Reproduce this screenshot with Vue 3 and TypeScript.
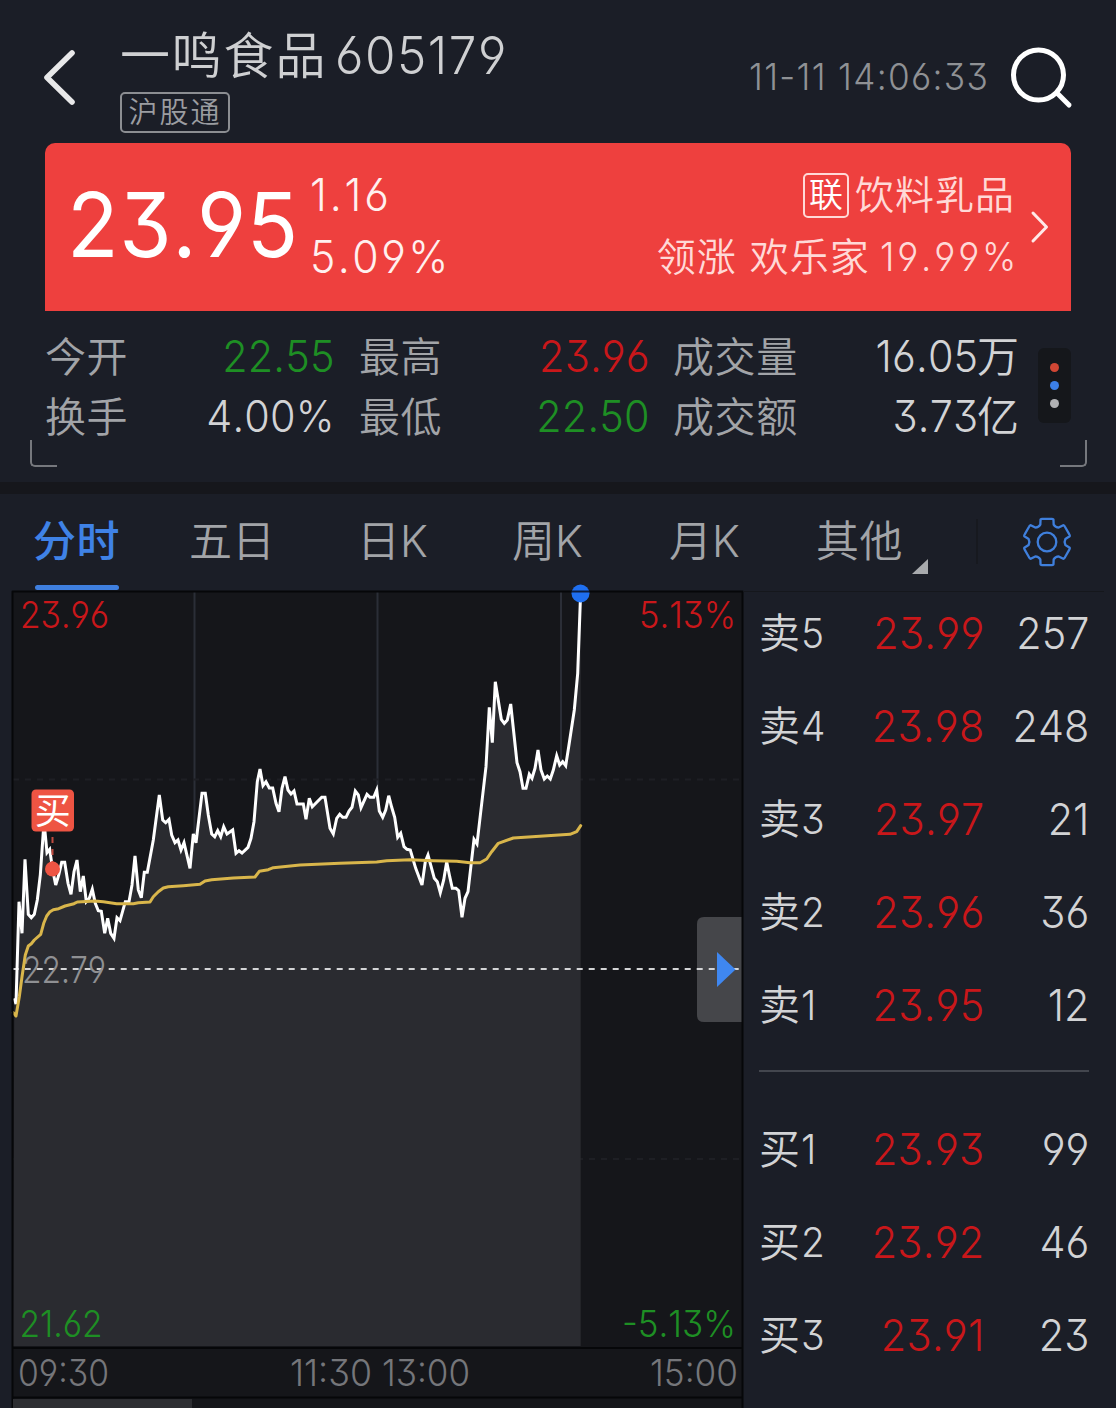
<script setup lang="ts">
type Tone = 'up' | 'down' | 'plain'

interface Stat { label: string; value: string; unit?: string; tone: Tone }
interface Quote { side: string; level: number; price: string; amount: number }
type Point = [number, number]

const stats: Stat[][] = [
  [
    { label: '今开', value: '22.55', tone: 'down' },
    { label: '换手', value: '4.00%', tone: 'plain' },
  ],
  [
    { label: '最高', value: '23.96', tone: 'up' },
    { label: '最低', value: '22.50', tone: 'down' },
  ],
  [
    { label: '成交量', value: '16.05', unit: '万', tone: 'plain' },
    { label: '成交额', value: '3.73', unit: '亿', tone: 'plain' },
  ],
]

const asks: Quote[] = [
  { side: '卖', level: 5, price: '23.99', amount: 257 },
  { side: '卖', level: 4, price: '23.98', amount: 248 },
  { side: '卖', level: 3, price: '23.97', amount: 21 },
  { side: '卖', level: 2, price: '23.96', amount: 36 },
  { side: '卖', level: 1, price: '23.95', amount: 12 },
]
const bids: Quote[] = [
  { side: '买', level: 1, price: '23.93', amount: 99 },
  { side: '买', level: 2, price: '23.92', amount: 46 },
  { side: '买', level: 3, price: '23.91', amount: 23 },
]

// Samples are stored in thirds of a pixel, measured from y = 580.
const price: Point[] = [
  [43, 1255], [48, 1272], [57, 965], [66, 1060], [75, 838], [85, 1003], [94, 1013], [103, 1003], [112, 960],
  [121, 885], [130, 755], [135, 755], [141, 818], [149, 808], [158, 870], [167, 915], [176, 885], [185, 847],
  [194, 847], [204, 910], [213, 943], [222, 875], [231, 840], [241, 935], [250, 888], [259, 965], [268, 955],
  [277, 928], [286, 970], [295, 992], [304, 994], [314, 1060], [323, 1015], [332, 1060], [342, 1075],
  [351, 1013], [360, 1022], [376, 965], [387, 965], [396, 915], [405, 828], [415, 930], [424, 953],
  [433, 877], [442, 877], [460, 780], [478, 645], [488, 720], [497, 728], [507, 718], [515, 765],
  [525, 788], [534, 780], [543, 810], [552, 788], [570, 865], [580, 762], [588, 788], [606, 640],
  [616, 640], [625, 705], [635, 762], [644, 770], [653, 752], [662, 770], [671, 740], [681, 762],
  [698, 750], [708, 820], [717, 812], [726, 819], [744, 802], [753, 775], [762, 725], [772, 605],
  [780, 567], [789, 617], [798, 605], [808, 624], [818, 624], [828, 670], [837, 695], [846, 625],
  [855, 590], [864, 630], [873, 642], [882, 633], [891, 672], [910, 672], [918, 718], [928, 655],
  [937, 680], [965, 652], [975, 652], [990, 745], [1000, 762], [1010, 715], [1019, 703], [1028, 712],
  [1038, 712], [1047, 693], [1056, 682], [1066, 633], [1075, 645], [1083, 683], [1101, 643], [1110, 652],
  [1121, 652], [1130, 630], [1138, 693], [1148, 712], [1157, 690], [1166, 647], [1175, 682], [1184, 712],
  [1193, 772], [1202, 760], [1212, 800], [1221, 808], [1231, 810], [1247, 865], [1266, 915], [1276, 845],
  [1284, 825], [1303, 895], [1312, 905], [1321, 938], [1331, 900], [1340, 845], [1349, 890], [1357, 925],
  [1368, 925], [1376, 932], [1386, 1012], [1395, 955], [1404, 935], [1422, 778], [1431, 792], [1458, 560],
  [1468, 382], [1477, 488], [1486, 305], [1504, 418], [1513, 430], [1522, 420], [1532, 372], [1551, 548],
  [1560, 575], [1569, 625], [1578, 625], [1588, 583], [1596, 595], [1605, 565], [1614, 510], [1623, 570],
  [1633, 597], [1642, 588], [1651, 597], [1660, 570], [1670, 527], [1679, 555], [1688, 545], [1697, 557],
  [1706, 500], [1723, 390], [1733, 280], [1741, 65], [1742, 40],
]
const average: Point[] = [
  [40, 1298], [48, 1308], [58, 1250], [66, 1190], [76, 1125], [85, 1098], [94, 1091], [103, 1080],
  [122, 1063], [131, 1030], [140, 1008], [150, 995], [160, 989], [176, 986], [195, 978], [222, 971],
  [232, 966], [285, 963], [310, 965], [350, 971], [400, 971], [415, 968], [450, 966], [460, 950],
  [475, 935], [490, 924], [505, 920], [550, 917], [600, 913], [615, 903], [635, 899], [700, 894],
  [765, 891], [778, 874], [805, 869], [820, 863], [900, 855], [1020, 850], [1130, 846], [1160, 842],
  [1230, 839], [1300, 842], [1370, 844], [1410, 848], [1440, 848], [1460, 837], [1475, 815],
  [1495, 790], [1540, 774], [1710, 763], [1730, 755], [1742, 737],
]
const trace = (pts: Point[]) => pts.map(([x, y]) => `${(x / 3).toFixed(1)},${(580 + y / 3).toFixed(1)}`).join(' ')
const priceLine = trace(price)
const averageLine = trace(average)
const area = `13,1346 ${priceLine} 580.7,1346`

const chartLabels = [
  { text: '22.79', tone: 'mute', x: 22, y: 983, w: 84 },
  { text: '23.96', tone: 'hi', x: 20, y: 628, w: 89 },
  { text: '5.13%', tone: 'hi', x: 639, y: 628, w: 97 },
  { text: '21.62', tone: 'lo', x: 19.5, y: 1337, w: 83 },
  { text: '-5.13%', tone: 'lo', x: 622, y: 1337, w: 114 },
  { text: '09:30', tone: 'axis', x: 18, y: 1386, w: 91 },
  { text: '11:30', tone: 'axis', x: 290, y: 1386, w: 82 },
  { text: '13:00', tone: 'axis', x: 382, y: 1386, w: 88 },
  { text: '15:00', tone: 'axis', x: 650, y: 1386, w: 88 },
]

// Cog outline: six teeth around the centre of a 52px box.
const cog = Array.from({ length: 6 }, (_, i) => {
  const at = (deg: number, r: number) => {
    const a = ((deg + i * 60 - 90) * Math.PI) / 180
    return `${(26 + r * Math.cos(a)).toFixed(2)} ${(26 + r * Math.sin(a)).toFixed(2)}`
  }
  return `${i ? 'L' : 'M'}${at(-16, 23.4)} Q${at(-14, 24)} ${at(-11, 23.6)} L${at(11, 23.6)} Q${at(14, 24)} ${at(16, 23.4)} L${at(21, 18.6)} Q${at(30, 16.8)} ${at(39, 18.6)}`
}).join(' ') + 'Z'
</script>

<template>
  <main class="page">
    <header class="top">
      <svg class="back" width="36" height="60" viewBox="0 0 36 60"><path d="M31 6 6 30.5 31 55" /></svg>
      <div class="name">
        <h1><span class="zh">一鸣食品</span><span class="code">605179</span></h1>
        <span class="tag">沪股通</span>
      </div>
      <time class="clock">11-11 14:06:33</time>
      <svg class="search" width="64" height="64" viewBox="0 0 64 64"><circle cx="29.5" cy="29" r="25" /><path d="M48 47 60 59" /></svg>
    </header>

    <section class="card">
      <strong class="last">23.95</strong>
      <div class="change"><span class="diff">1.16</span><span class="pct">5.09%</span></div>
      <div class="sector">
        <div class="industry"><span class="box">联</span><span>饮料乳品</span></div>
        <div class="leader"><span>领涨</span><span>欢乐家</span><span class="num">19.99%</span></div>
      </div>
      <svg class="go" width="20" height="34" viewBox="0 0 20 34"><path d="M3 3 16.5 17 3 31" /></svg>
    </section>

    <section class="stats">
      <dl v-for="(col, c) in stats" :key="c" :class="`col${c}`">
        <div v-for="s in col" :key="s.label">
          <dt>{{ s.label }}</dt>
          <dd :class="s.tone"><span class="val">{{ s.value }}</span><i v-if="s.unit">{{ s.unit }}</i></dd>
        </div>
      </dl>
      <div class="more"><b class="d1" /><b class="d2" /><b class="d3" /></div>
    </section>
    <div class="corners"><i class="bl" /><i class="br" /></div>
    <div class="band" />

    <nav class="tabs">
      <a class="t0 active">分时</a><a class="t1">五日</a><a class="t2">日K</a><a class="t3">周K</a><a class="t4">月K</a><a class="t5">其他</a>
      <svg class="caret" width="16" height="15" viewBox="0 0 16 15"><path d="M16 0V15H0Z" /></svg>
      <i class="sep" />
      <svg class="gear" width="52" height="52" viewBox="0 0 52 52"><path :d="cog" /><circle cx="26" cy="26" r="9.3" /></svg>
    </nav>

    <section class="body">
      <svg class="chart" width="731" height="817" viewBox="12 591 731 817">
        <rect class="plot" x="12" y="591" width="731" height="817" />
        <path class="grid" d="M194.5 592V1340M377.5 592V1340M561 592V1340" />
        <path class="faint" d="M13 779.5H742M13 1159H742" />
        <polygon class="area" :points="area" />
        <path class="handle" d="M743 917H704Q697 917 697 924V1015Q697 1022 704 1022H743Z" />
        <path class="mid" d="M12.7 969H740" />
        <path class="tri" d="M717 952 735.5 969.5 717 987Z" />
        <text
          v-for="l in chartLabels" :key="l.text" :class="l.tone" :x="l.x" :y="l.y"
          :textLength="l.w" lengthAdjust="spacingAndGlyphs"
        >{{ l.text }}</text>
        <polyline class="price" :points="priceLine" />
        <polyline class="avg" :points="averageLine" />
        <path class="frame" d="M12.5 1408V591.5H742.5V1408M12 1348H743M12 1397.5H743" />
        <circle class="now" cx="580.5" cy="593.5" r="9" />
        <path class="frame soft" d="M571.8 591.5H589.2" />
        <path class="stem" d="M52.5 837V862" />
        <rect class="flag" x="31.5" y="789.5" width="42.5" height="42" rx="4.5" />
        <text class="buy" x="52.7" y="824">买</text>
        <circle class="flag" cx="52.5" cy="869" r="7.5" />
        <rect class="vol" x="13" y="1399" width="179" height="9" />
      </svg>

      <div class="book">
        <div v-for="q in asks" :key="q.side + q.level" class="row">
          <span class="lv">{{ q.side }}<i>{{ q.level }}</i></span><span class="pr">{{ q.price }}</span><span class="am">{{ q.amount }}</span>
        </div>
        <hr>
        <div v-for="q in bids" :key="q.side + q.level" class="row">
          <span class="lv">{{ q.side }}<i>{{ q.level }}</i></span><span class="pr">{{ q.price }}</span><span class="am">{{ q.amount }}</span>
        </div>
      </div>
    </section>
  </main>
</template>

<style>
body { background: #1b1e27; }
</style>

<style scoped>
.page {
  width: 1116px; height: 1408px; overflow: hidden; background: #1b1e27; color: #d2d3d5;
  font-family: Inter, "Noto Sans CJK SC", sans-serif; font-weight: 350; font-kerning: none;
  font-feature-settings: "cv03", "cv04", "cv09";
}
i { font-style: normal; }
svg { display: block; flex: none; fill: none; stroke-linecap: round; stroke-linejoin: round; }

/* Condensed numerals */
.code, .clock, .last, .diff, .pct, .lv i { display: block; transform: scaleX(.95); transform-origin: 0 50%; white-space: nowrap; }
.num, .val, .pr, .am { display: inline-block; transform: scaleX(.94); transform-origin: 100% 50%; white-space: nowrap; }

.top { display: flex; height: 143px; padding-left: 41px; box-sizing: border-box; }
.back { margin-top: 47px; stroke: #e8e8e9; stroke-width: 5.6; }
.name { width: 640px; margin-left: 43px; padding-top: 25px; }
h1 { display: flex; margin: 0; height: 62px; line-height: 62px; font-weight: 350; color: #cfd0d2; }
.zh { width: 215px; font-size: 50px; letter-spacing: 1.8px; }
.code { font-size: 52px; letter-spacing: 1.6px; }
.tag {
  display: block; width: 110px; height: 41px; margin-top: 5px; box-sizing: border-box; border: 2px solid #8c8e92;
  border-radius: 5px; font-size: 29px; line-height: 38px; letter-spacing: 2px; text-align: center; text-indent: 0; color: #9b9da1; white-space: nowrap;
}
.clock { width: 237px; margin-left: -11px; margin-top: 57px; line-height: 40px; font-size: 37px; letter-spacing: 1.4px; color: #8f9195; }
.search { margin-left: 23px; margin-top: 46px; stroke: #fff; stroke-width: 5; }

.card {
  display: flex; width: 1026px; height: 168px; margin-left: 45px; box-sizing: border-box;
  background: #ee403e; color: #fff; border-radius: 10px 10px 0 0;
}
.last { width: 218px; margin-left: 22px; margin-right: 25px; padding-top: 30px; line-height: 104px; font-size: 89px; font-weight: 380; letter-spacing: .6px; }
.change { width: 149px; padding-top: 21px; font-size: 45px; line-height: 62px; color: #fff0ef; }
.diff { letter-spacing: 3px; }
.pct { letter-spacing: 2.6px; }
.sector { flex: 1; padding-top: 21px; color: #ffd9d7; font-size: 39px; }
.industry, .leader { display: flex; justify-content: flex-end; line-height: 62px; height: 62px; letter-spacing: 1px; white-space: nowrap; }
.industry { align-items: center; }
.box { width: 46px; height: 45px; box-sizing: border-box; margin-right: 6px; border: 2px solid #ffd9d7; border-radius: 5px; font-size: 34px; line-height: 39px; text-align: center; letter-spacing: 0; color: #fff; }
.leader span + span { margin-left: 13px; }
.leader .num { margin-left: 1px; margin-right: -4px; letter-spacing: 3px; }
.go { margin: 67px 21px 0 15px; stroke: #ffe9e8; stroke-width: 3; }

.stats { display: flex; height: 129px; padding: 16px 0 0 45px; box-sizing: border-box; }
dl { margin: 0; }
dl > div { display: flex; justify-content: space-between; height: 60px; line-height: 60px; }
.col0 { width: 288px; }
.col1 { width: 289px; margin-left: 26px; }
.col2 { width: 346px; margin-left: 25px; }
dt { font-size: 41px; letter-spacing: .6px; color: #a2a4a8; }
dd { margin: -1px 0 0; font-size: 44px; }
.val { letter-spacing: .2px; margin-right: -1.5px; }
dd i { font-size: 42px; margin-left: 0; }
.up { color: #c9171a; }
.down { color: #1e8f24; }
.more { width: 33px; height: 75px; margin: 21px 0 0 19px; border-radius: 6px; background: #15171b; display: flex; flex-direction: column; align-items: center; justify-content: center; gap: 9px; }
.more b { width: 9px; height: 9px; border-radius: 50%; }
.d1 { background: #d04634; }
.d2 { background: #3c7fe6; }
.d3 { background: #b0b1b4; }
.corners { display: flex; justify-content: space-between; height: 42px; padding: 0 29.5px; }
.corners i { width: 27px; height: 27px; box-sizing: border-box; border: solid #76787d; }
.corners .bl { border-width: 0 0 2.5px 2.5px; border-radius: 0 0 0 5px; }
.corners .br { border-width: 0 2.5px 2.5px 0; border-radius: 0 0 5px 0; }
.band { height: 12px; background: #16171c; }

.tabs { display: flex; height: 97px; font-size: 43px; line-height: 94px; color: #a2a4a8; padding-left: 33px; box-sizing: border-box; }
.tabs a { white-space: nowrap; height: 97px; box-sizing: border-box; }
.active { color: #3f82e6; font-weight: 500; position: relative; }
.active::after { content: ""; position: absolute; left: 2px; top: 91px; width: 84px; height: 5px; border-radius: 3px; background: #3f7fdf; }
.t0 { width: 156px; letter-spacing: .5px; }
.t1 { width: 168px; }
.t2 { width: 155px; }
.t3 { width: 157px; }
.t4 { width: 147px; }
.t5 { width: 96px; letter-spacing: .5px; }
.caret { margin-top: 65px; fill: #a8aaad; }
.sep { width: 2px; height: 45px; margin: 25px 43px 0 48px; background: #17191f; }
.gear { margin-top: 22px; stroke: #3f7fdc; stroke-width: 2.3; }

.body { display: flex; padding-left: 12px; }
.chart { overflow: visible; font-size: 37px; font-weight: 330; }
.chart .plot { fill: #15161a; }
.grid { stroke: #2b2e37; stroke-width: 2; }
.area { fill: #2a2b30; }
.faint { stroke: #1e1f24; stroke-width: 2; stroke-dasharray: 6 6; stroke-linecap: butt; }
.mid { stroke: #d3d4d6; stroke-width: 2; stroke-dasharray: 6 6; stroke-linecap: butt; }
.price { stroke: #fff; stroke-width: 3; stroke-linejoin: miter; stroke-linecap: butt; }
.avg { stroke: #d9b64b; stroke-width: 3; }
.frame { stroke: #060709; stroke-width: 2; stroke-linecap: butt; }
.soft { stroke: #0c1e42; }
.now { fill: #1f6ff0; }
.handle { fill: #45464a; }
.tri { fill: #3f87f0; }
.stem { stroke: #c04a3f; stroke-width: 2; stroke-dasharray: 6 6; stroke-linecap: butt; }
.flag { fill: #ee5443; }
.buy { fill: #fff; font-size: 36px; text-anchor: middle; font-weight: 400; }
.hi { fill: #c9171a; }
.lo { fill: #1e8f24; }
.mute { fill: #8f9093; }
.axis { fill: #75767a; }
.vol { fill: #2d2e32; }

.book { width: 361px; height: 817px; box-sizing: border-box; padding: 0 15px 0 16px; border-top: 1px solid #15171c; }
.row { display: flex; height: 93px; line-height: 82px; font-size: 44px; }
.lv { display: flex; width: 90px; font-size: 41px; }
.lv i { margin-left: 1px; }
.pr { width: 135.5px; text-align: right; letter-spacing: .3px; color: #c9171a; }
.am { width: 104.5px; text-align: right; letter-spacing: .1px; }
hr { width: 330px; height: 2px; margin: 13px 0 36px; border: 0; background: #43464e; }
</style>
